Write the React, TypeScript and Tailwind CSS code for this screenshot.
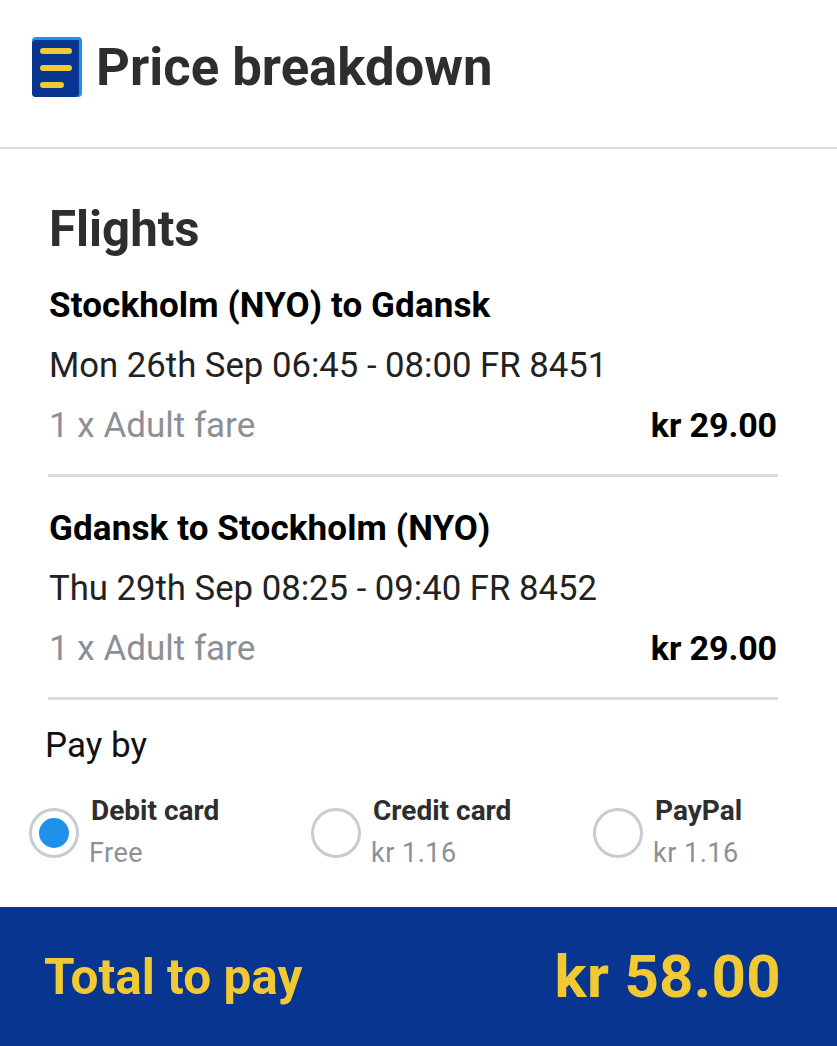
export default function App() {
  const font = { fontFamily: "Roboto, sans-serif" };
  const Flight = ({ title, time }: { title: string; time: string }) => (
    <div className="h-[223px] border-b-[3px] border-[#d9dcde] -ml-[1px] w-[730px] pl-[1px] pt-[21px]">
      <div className="h-[61px] flex items-center text-[35px] font-bold text-[#000] leading-none tracking-[0.12px]">{title}</div>
      <div className="-mt-[1px] h-[60px] flex items-center text-[34.7px] text-[#222] leading-none">{time}</div>
      <div className="h-[60px] flex items-center justify-between pr-[1px] text-[35px] leading-none">
        <span className="text-[#8c9096]">1 x Adult fare</span>
        <span className="font-bold text-[34px] text-black tracking-[-0.1px]">kr 29.00</span>
      </div>
    </div>
  );
  const Pay = ({ label, sub, checked }: { label: string; sub: string; checked?: boolean }) => (
    <div className="w-[282px] shrink-0 flex items-center">
      <div className="w-[50px] h-[50px] rounded-full border-[3px] border-[#c6ccd0] flex items-center justify-center shrink-0">
        {checked && <div className="w-[30px] h-[30px] rounded-full bg-[#2091eb]" />}
      </div>
      <div className="ml-[10px]">
        <div className="ml-[2px] text-[28px] leading-[40px] font-bold text-[#2e2e2e]">{label}</div>
        <div className="text-[27px] leading-[44px] text-[#8c9096] tracking-[0.5px]">{sub}</div>
      </div>
    </div>
  );
  return (
    <div className="w-[837px] h-[1046px] bg-white flex flex-col overflow-hidden" style={font}>
      <div className="h-[149px] shrink-0 border-b-2 border-[#d9dcde] flex items-center pl-[32px] pb-[13px]">
        <svg width="50" height="60" viewBox="0 0 50 60" className="shrink-0 -mt-[1px]">
          <rect x="0" y="0" width="50" height="60" rx="4" fill="#2091eb" />
          <path d="M0 6a4 4 0 0 1 3-3h44v53a4 4 0 0 1-4 4H4a4 4 0 0 1-4-4Z" fill="#073590" />
          <rect x="8" y="11" width="32" height="6" rx="3" fill="#f1c933" />
          <rect x="8" y="28" width="32" height="6" rx="3" fill="#f1c933" />
          <rect x="8" y="45" width="24" height="6" rx="3" fill="#f1c933" />
        </svg>
        <div className="ml-[14px] text-[52.7px] leading-none font-bold text-[#2e2e2e]">Price breakdown</div>
      </div>
      <div className="flex-1 pl-[49px] pt-[53px]">
        <div className="text-[49.2px] leading-[54px] font-bold text-[#2e2e2e]">Flights</div>
        <div className="-mt-[2px]">
          <Flight title="Stockholm (NYO) to Gdansk" time="Mon 26th Sep 06:45 - 08:00 FR 8451" />
          <Flight title="Gdansk to Stockholm (NYO)" time="Thu 29th Sep 08:25 - 09:40 FR 8452" />
        </div>
        <div className="-ml-[4px] mt-[24px] text-[35px] leading-[44px] text-[#111]">Pay by</div>
        <div className="-ml-[20px] mt-[23px] flex">
          <Pay label="Debit card" sub="Free" checked />
          <Pay label="Credit card" sub="kr 1.16" />
          <Pay label="PayPal" sub="kr 1.16" />
        </div>
      </div>
      <div className="h-[139px] shrink-0 bg-[#073590] flex items-center justify-between pl-[44px] pr-[56px] font-bold text-[#f1c933]">
        <span className="text-[49.5px] leading-none pt-[2px]">Total to pay</span>
        <span className="text-[60px] leading-none tracking-[0.3px]">kr 58.00</span>
      </div>
    </div>
  );
}
